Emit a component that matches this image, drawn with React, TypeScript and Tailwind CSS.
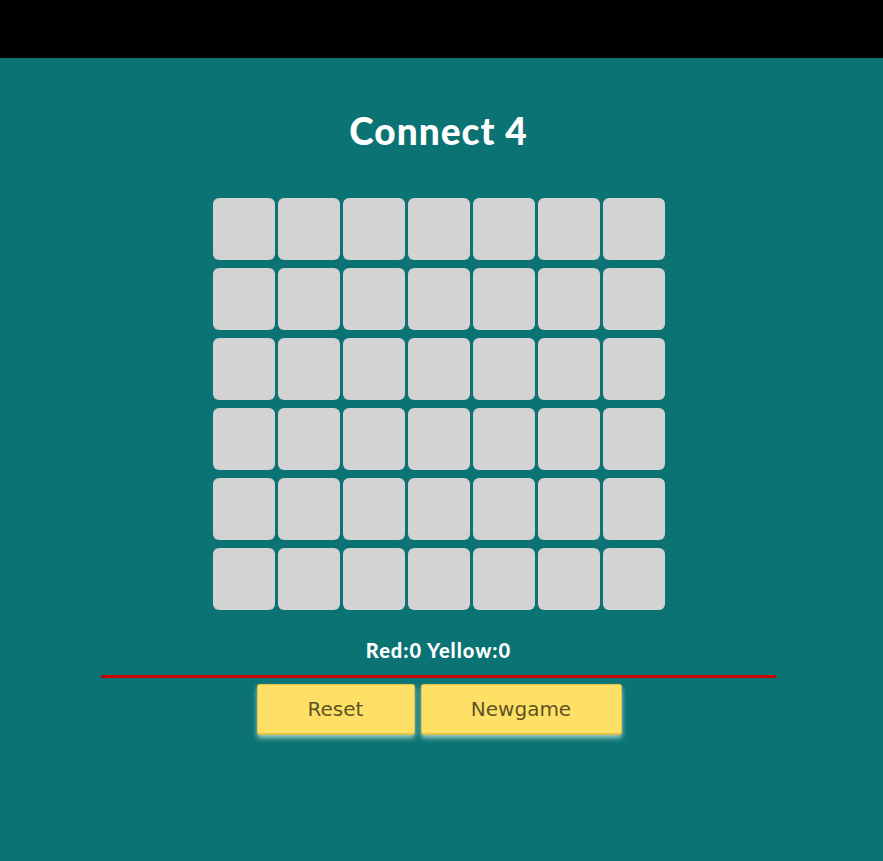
const ROWS = 6;
const COLS = 7;

export default function App() {
  const cells = Array.from({ length: ROWS * COLS }, (_, i) => i);

  return (
    <div className="min-h-[861px] bg-[#0b7373]">
      <div className="h-[58px] bg-black" />

      <div className="pr-[6px]">
        <h1 className="mt-[48px] text-center font-['Lato',sans-serif] text-[37px] font-black leading-[50px] tracking-[1px] text-white">
          Connect 4
        </h1>

        <div className="mx-auto mt-[42px] grid w-[452px] grid-cols-7 gap-x-[3px] gap-y-[8px]">
          {cells.map((c) => (
            <div key={c} className="h-[62px] w-[62px] rounded-[6px] bg-[#d3d3d3]" />
          ))}
        </div>

        <p className="mt-[28px] text-center font-['Lato',sans-serif] text-[20px] font-black leading-[24px] tracking-[1px] text-white">
          Red:0 Yellow:0
        </p>

        <div className="mx-auto mt-[13px] h-[3px] w-[675px] bg-[#c80000]" />

        <div className="mt-[6px] flex justify-center gap-[6px] pl-[1px]">
          <button className="h-[51px] w-[158px] rounded-[3px] border border-b-2 border-[#e3c24a] bg-[#ffe066] font-['DejaVu_Sans',sans-serif] text-[20px] text-[#5e5424] shadow-[0_3px_5px_rgba(190,230,220,0.8)]">
            Reset
          </button>
          <button className="h-[51px] w-[201px] rounded-[3px] border border-b-2 border-[#e3c24a] bg-[#ffe066] font-['DejaVu_Sans',sans-serif] text-[20px] text-[#5e5424] shadow-[0_3px_5px_rgba(190,230,220,0.8)]">
            Newgame
          </button>
        </div>
      </div>
    </div>
  );
}
